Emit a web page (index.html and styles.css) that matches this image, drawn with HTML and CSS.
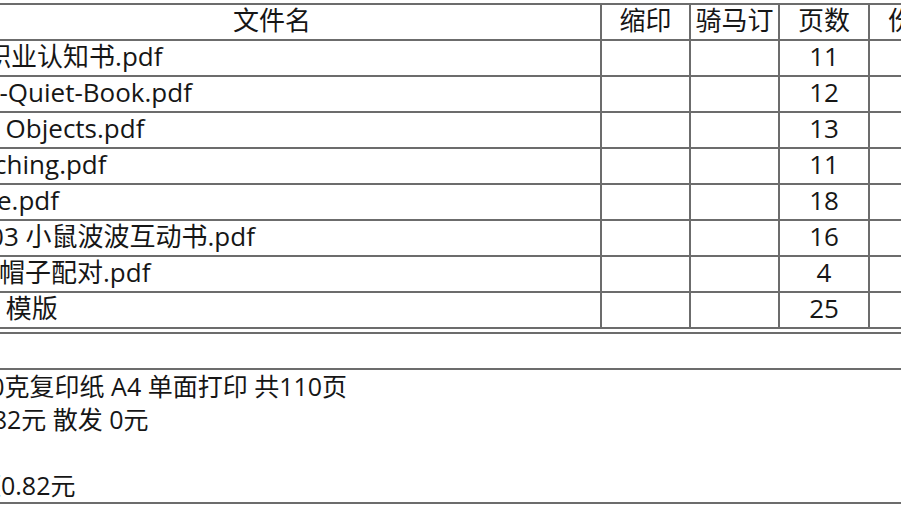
FILE: index.html
```html
<!DOCTYPE html>
<html lang="zh-CN">
<head>
<meta charset="utf-8">
<title>打印订单</title>
<link rel="stylesheet" href="styles.css">
</head>
<body>
<div class="files">
  <div class="cell head">文件名</div>
  <div class="cell head">缩印</div>
  <div class="cell head">骑马订</div>
  <div class="cell head">页数</div>
  <div class="cell head">份数</div>

  <div class="cell name">01-职业认知书.pdf</div>
  <div class="cell"></div><div class="cell"></div>
  <div class="cell num">11</div><div class="cell"></div>

  <div class="cell name">Mini-Quiet-Book.pdf</div>
  <div class="cell"></div><div class="cell"></div>
  <div class="cell num">12</div><div class="cell"></div>

  <div class="cell name">Find Objects.pdf</div>
  <div class="cell"></div><div class="cell"></div>
  <div class="cell num">13</div><div class="cell"></div>

  <div class="cell name">Matching.pdf</div>
  <div class="cell"></div><div class="cell"></div>
  <div class="cell num">11</div><div class="cell"></div>

  <div class="cell name">Maze.pdf</div>
  <div class="cell"></div><div class="cell"></div>
  <div class="cell num">18</div><div class="cell"></div>

  <div class="cell name">No.03 小鼠波波互动书.pdf</div>
  <div class="cell"></div><div class="cell"></div>
  <div class="cell num">16</div><div class="cell"></div>

  <div class="cell name">动物帽子配对.pdf</div>
  <div class="cell"></div><div class="cell"></div>
  <div class="cell num">4</div><div class="cell"></div>

  <div class="cell name">封面 模版</div>
  <div class="cell"></div><div class="cell"></div>
  <div class="cell num">25</div><div class="cell"></div>
</div>

<div class="summary">
  <div class="summary-gap"></div>
  <div class="summary-body">
    <p class="line">纸张：80克复印纸 A4 单面打印 共110页</p>
    <p class="line">打印 ¥0.82元 散发 0元</p>
    <p class="line">&nbsp;</p>
    <p class="line">合计金额0.82元</p>
  </div>
</div>
</body>
</html>
```

FILE: styles.css
```css
html, body {
  margin: 0;
  padding: 0;
  overflow: hidden;
  background: #ffffff;
}

body {
  width: 901px;
  height: 507px;
  font-family: "Open Sans", "Noto Sans CJK SC", sans-serif;
  font-size: 25px;
  color: #161616;
}

.files {
  display: grid;
  grid-template-columns: 658px 89px 89px 90px 90px;
  width: 1016px;
  margin: 3px 0 0 -56px;
  border-top: 2px solid #6c6c6c;
  font-size: 26px;
}

.cell {
  box-sizing: border-box;
  height: 36px;
  line-height: 30px;
  padding: 0 0 4px 0;
  border-right: 2px solid #6c6c6c;
  border-bottom: 2px solid #6c6c6c;
  white-space: nowrap;
  overflow: hidden;
}

.head {
  text-align: center;
}

.name {
  padding-left: 3px;
}

.num {
  text-align: center;
}

.summary {
  width: 1100px;
  margin: 3px 0 0 -102px;
  border-top: 2px solid #6c6c6c;
}

.summary-gap {
  box-sizing: border-box;
  height: 36px;
  border-bottom: 2px solid #6c6c6c;
}

.summary-body {
  padding-left: 3px;
  border-bottom: 2px solid #6c6c6c;
}

.line {
  margin: 0;
  height: 33px;
  line-height: 33px;
  white-space: nowrap;
}
```
